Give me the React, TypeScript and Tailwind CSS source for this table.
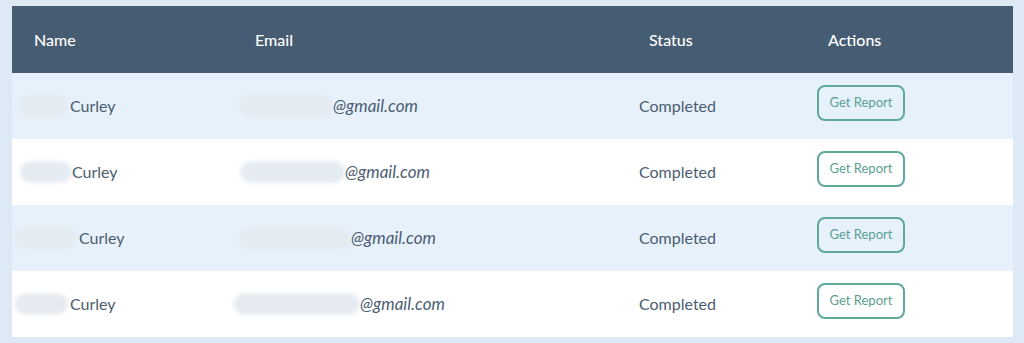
const rows = [
  { nameBlob: [6, 50], curley: 58, emailBlob: [7, 93], email: 100, bg: "bg-[#e6f1fb]" },
  { nameBlob: [8, 52], curley: 60, emailBlob: [7, 105], email: 112, bg: "bg-white" },
  { nameBlob: [4, 60], curley: 67, emailBlob: [6, 112], email: 118, bg: "bg-[#e6f1fb]" },
  { nameBlob: [3, 53], curley: 58, emailBlob: [1, 126], email: 127, bg: "bg-white" },
]

function Blob({ left, width }: { left: number; width: number }) {
  return (
    <span
      className="absolute top-1/2 h-[21px] -translate-y-1/2 rounded-full bg-[#e4ebf1] blur-[2px]"
      style={{ left, width }}
    />
  )
}

export default function App() {
  return (
    <div className="h-[343px] w-[1024px] bg-[#dde9f5] pt-[6px] pl-[12px] font-['Lato',sans-serif]">
      <div className="w-[1001px]">
        {/* Header */}
        <div className="flex h-[67px] items-center bg-[#465c72] text-[16px] font-medium text-white">
          <div className="w-[221px] pl-[22px]">Name</div>
          <div className="w-[387px] pl-[22px]">Email</div>
          <div className="w-[180px] pl-[29px]">Status</div>
          <div className="pl-[28px]">Actions</div>
        </div>

        {rows.map((r, i) => (
          <div
            key={i}
            className={`flex h-[66px] items-center text-[16px] text-[#4b5d70] ${r.bg}`}
          >
            <div className="relative h-full w-[221px]">
              <Blob left={r.nameBlob[0]} width={r.nameBlob[1]} />
              <span
                className="absolute top-1/2 -translate-y-1/2"
                style={{ left: r.curley }}
              >
                Curley
              </span>
            </div>
            <div className="relative h-full w-[387px]">
              <Blob left={r.emailBlob[0]} width={r.emailBlob[1]} />
              <span
                className="absolute top-1/2 -translate-y-1/2 text-[17px] italic"
                style={{ left: r.email }}
              >
                @gmail.com
              </span>
            </div>
            <div className="w-[180px] pl-[19px]">Completed</div>
            <div className="pl-[17px]">
              <button className="mb-[6px] flex h-[36px] w-[88px] items-center justify-center rounded-[8px] border-2 border-[#5ea99a] text-[13px] text-[#5a9f91]">
                Get Report
              </button>
            </div>
          </div>
        ))}
      </div>
    </div>
  )
}
